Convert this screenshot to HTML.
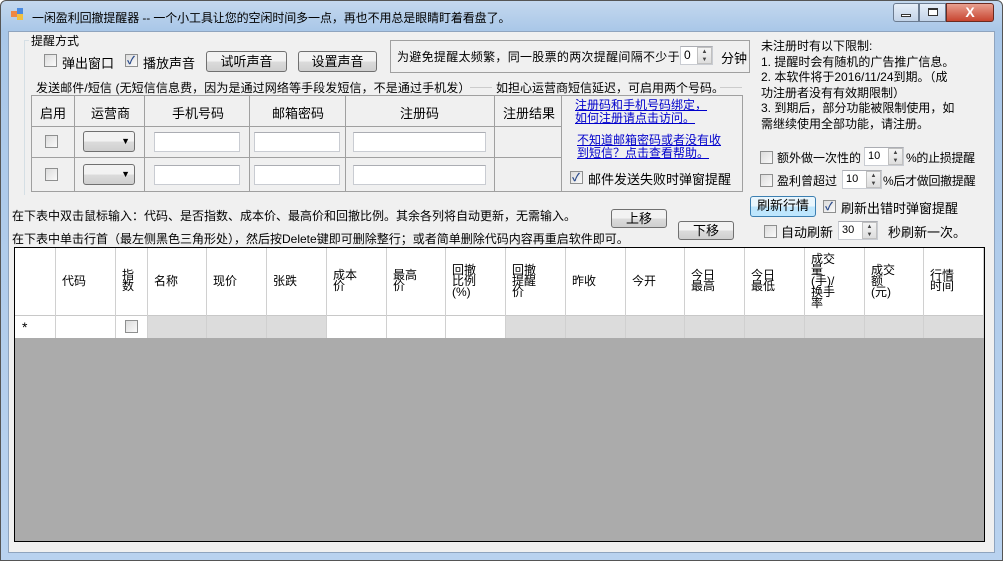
<!DOCTYPE html>
<html><head><meta charset="utf-8"><style>
*{box-sizing:border-box;margin:0;padding:0}
body{width:1003px;height:561px;overflow:hidden;background:#fff;font-family:"Liberation Sans","Noto Sans CJK SC",sans-serif;font-size:12px;color:#000;position:relative}
.a{position:absolute;white-space:nowrap}
.frame{left:0;top:0;width:1003px;height:561px;background:linear-gradient(#c4d8ee,#a9c7e8 30px,#b9d2ef);border:1px solid #555;border-radius:6px 6px 0 0}
.client{left:8px;top:31px;width:987px;height:522px;background:#f0f0f0;border:1px solid #8fa4be}
.cb{width:13px;height:13px;border:1px solid #8e8f8f;background:linear-gradient(135deg,#dcdcdc,#fafafa)}
.cb.ck::after{content:"✓";position:absolute;left:1px;top:-3px;font-size:11px;color:#2a4a8a;font-weight:bold}
.btn{border:1px solid #707070;border-radius:3px;background:linear-gradient(#f2f2f2 50%,#dcdcdc 50%,#cfcfcf);text-align:center;font-size:13px}
.tb{background:#fff;border:1px solid #c9ccd2;border-top-color:#abadb3}
.spin{width:15px;border:1px solid #c0c0c0;background:linear-gradient(#f4f4f4,#dedede);font-size:6px;text-align:center;line-height:8px;color:#444}
.line{background:#a0a0a0}
.gl{background:#d0d0d0}
a{color:#00c;text-decoration:underline}
.gh{position:absolute;top:248px;height:66px;display:flex;align-items:center;font-size:12px;line-height:11px;padding-left:7px;white-space:normal}
</style></head><body>
<div class="a frame"></div>
<div class="a" style="left:11px;top:11px;width:6px;height:6px;background:#e84"></div>
<div class="a" style="left:17px;top:8px;width:6px;height:6px;background:#4a8ae0"></div>
<div class="a" style="left:17px;top:14px;width:6px;height:6px;background:#f0c040"></div>
<div class="a" style="left:32px;top:9px;font-size:12px;letter-spacing:-0.1px">一闲盈利回撤提醒器 -- 一个小工具让您的空闲时间多一点，再也不用总是眼睛盯着看盘了。</div>
<div class="a" style="left:893px;top:3px;width:26px;height:19px;border:1px solid #6b7b90;border-radius:3px 0 0 3px;background:linear-gradient(#e6eef8,#c2d3e8)"></div>
<div class="a" style="left:901px;top:14px;width:10px;height:3px;background:#fff;border:1px solid #333"></div>
<div class="a" style="left:919px;top:3px;width:27px;height:19px;border:1px solid #6b7b90;background:linear-gradient(#e6eef8,#c2d3e8)"></div>
<div class="a" style="left:928px;top:8px;width:10px;height:8px;border:1px solid #333;border-top-width:2px;background:#fff"></div>
<div class="a" style="left:946px;top:3px;width:48px;height:19px;border:1px solid #6b2a20;border-radius:0 3px 3px 0;background:linear-gradient(#e8a090,#c84530);color:#fff;font-weight:bold;text-align:center;font-size:14px;line-height:17px">X</div>
<div class="a client"></div>

<div class="a" style="left:24px;top:40px;width:1px;height:155px;background:#d5dfe5"></div>
<div class="a" style="left:24px;top:40px;width:5px;height:1px;background:#d5dfe5"></div>
<div class="a" style="left:31px;top:32px">提醒方式</div>
<div class="a cb" style="left:44px;top:54px"></div><div class="a" style="left:62px;top:53px;font-size:13px">弹出窗口</div>
<div class="a cb ck" style="left:125px;top:54px"></div><div class="a" style="left:143px;top:53px;font-size:13px">播放声音</div>
<div class="a btn" style="left:206px;top:51px;width:81px;height:21px;line-height:19px">试听声音</div>
<div class="a btn" style="left:298px;top:51px;width:79px;height:21px;line-height:19px">设置声音</div>
<div class="a" style="left:390px;top:40px;width:360px;height:33px;border:1px solid #a0a0a0"></div>
<div class="a" style="left:397px;top:48px;font-size:12px;letter-spacing:0.3px">为避免提醒太频繁，同一股票的两次提醒间隔不少于</div>
<div class="a tb" style="left:680px;top:46px;width:33px;height:19px;padding-left:3px;line-height:16px">0</div>
<div class="a spin" style="left:697px;top:47px;height:17px">▲<br>▼</div>
<div class="a" style="left:721px;top:48px;font-size:13px">分钟</div>

<div class="a" style="left:36px;top:79px;font-size:12px;letter-spacing:0.1px">发送邮件/短信 (无短信信息费，因为是通过网络等手段发短信，不是通过手机发）</div>
<div class="a" style="left:470px;top:87px;width:22px;height:1px;background:#ccc"></div>
<div class="a" style="left:496px;top:79px;font-size:12px">如担心运营商短信延迟，可启用两个号码。</div>
<div class="a" style="left:720px;top:87px;width:22px;height:1px;background:#ccc"></div>

<div class="a" style="left:31px;top:95px;width:712px;height:97px;border:1px solid #a0a0a0"></div>
<div class="a line" style="left:31px;top:126px;width:530px;height:1px"></div>
<div class="a line" style="left:31px;top:157px;width:530px;height:1px"></div>
<div class="a line" style="left:74px;top:95px;width:1px;height:97px"></div>
<div class="a line" style="left:144px;top:95px;width:1px;height:97px"></div>
<div class="a line" style="left:249px;top:95px;width:1px;height:97px"></div>
<div class="a line" style="left:345px;top:95px;width:1px;height:97px"></div>
<div class="a line" style="left:494px;top:95px;width:1px;height:97px"></div>
<div class="a line" style="left:561px;top:95px;width:1px;height:97px"></div>
<div class="a" style="left:40px;top:103px;font-size:13px">启用</div>
<div class="a" style="left:91px;top:103px;font-size:13px">运营商</div>
<div class="a" style="left:172px;top:103px;font-size:13px">手机号码</div>
<div class="a" style="left:272px;top:103px;font-size:13px">邮箱密码</div>
<div class="a" style="left:400px;top:103px;font-size:13px">注册码</div>
<div class="a" style="left:503px;top:103px;font-size:13px">注册结果</div>
<div class="a cb" style="left:45px;top:135px"></div>
<div class="a cb" style="left:45px;top:168px"></div>
<div class="a btn" style="left:83px;top:131px;width:52px;height:21px;font-size:9px;text-align:right;padding-right:4px;line-height:19px">▼</div>
<div class="a btn" style="left:83px;top:164px;width:52px;height:21px;font-size:9px;text-align:right;padding-right:4px;line-height:19px">▼</div>
<div class="a tb" style="left:154px;top:132px;width:86px;height:20px"></div>
<div class="a tb" style="left:254px;top:132px;width:86px;height:20px"></div>
<div class="a tb" style="left:353px;top:132px;width:133px;height:20px"></div>
<div class="a tb" style="left:154px;top:165px;width:86px;height:20px"></div>
<div class="a tb" style="left:254px;top:165px;width:86px;height:20px"></div>
<div class="a tb" style="left:353px;top:165px;width:133px;height:20px"></div>
<div class="a" style="left:575px;top:99px;line-height:13px;font-size:12px"><a>注册码和手机号码绑定，<br>如何注册请点击访问。</a></div>
<div class="a" style="left:577px;top:134px;line-height:13px;font-size:12px"><a>不知道邮箱密码或者没有收<br>到短信？点击查看帮助。</a></div>
<div class="a cb ck" style="left:570px;top:171px"></div>
<div class="a" style="left:588px;top:169px;font-size:13px">邮件发送失败时弹窗提醒</div>

<div class="a" style="left:761px;top:39px;font-size:12px;line-height:15.5px">未注册时有以下限制:<br>1. 提醒时会有随机的广告推广信息。<br>2. 本软件将于2016/11/24到期。（成<br>功注册者没有有效期限制）<br>3. 到期后，部分功能被限制使用，如<br>需继续使用全部功能，请注册。</div>
<div class="a cb" style="left:760px;top:151px"></div>
<div class="a" style="left:777px;top:149px;font-size:12px">额外做一次性的</div>
<div class="a tb" style="left:864px;top:147px;width:40px;height:19px;padding-left:3px;line-height:16px;font-size:11px">10</div>
<div class="a spin" style="left:888px;top:148px;height:17px">▲<br>▼</div>
<div class="a" style="left:906px;top:149px;font-size:12px;letter-spacing:-0.3px">%的止损提醒</div>
<div class="a cb" style="left:760px;top:174px"></div>
<div class="a" style="left:777px;top:172px;font-size:12px">盈利曾超过</div>
<div class="a tb" style="left:842px;top:170px;width:40px;height:19px;padding-left:3px;line-height:16px;font-size:11px">10</div>
<div class="a spin" style="left:866px;top:171px;height:17px">▲<br>▼</div>
<div class="a" style="left:883px;top:172px;font-size:12px;letter-spacing:-0.3px">%后才做回撤提醒</div>
<div class="a btn" style="left:750px;top:196px;width:66px;height:21px;line-height:18px;border-color:#3c7fb1;background:linear-gradient(#eaf6fd 50%,#bee6fd 50%)">刷新行情</div>
<div class="a cb ck" style="left:823px;top:200px"></div>
<div class="a" style="left:841px;top:198px;font-size:13px">刷新出错时弹窗提醒</div>
<div class="a cb" style="left:764px;top:225px"></div>
<div class="a" style="left:781px;top:222px;font-size:13px">自动刷新</div>
<div class="a tb" style="left:838px;top:221px;width:40px;height:19px;padding-left:3px;line-height:16px;font-size:11px">30</div>
<div class="a spin" style="left:862px;top:222px;height:17px">▲<br>▼</div>
<div class="a" style="left:888px;top:222px;font-size:13px">秒刷新一次。</div>

<div class="a" style="left:12px;top:207px;font-size:12px">在下表中双击鼠标输入：代码、是否指数、成本价、最高价和回撤比例。其余各列将自动更新，无需输入。</div>
<div class="a" style="left:12px;top:230px;font-size:12px">在下表中单击行首（最左侧黑色三角形处），然后按Delete键即可删除整行；或者简单删除代码内容再重启软件即可。</div>
<div class="a btn" style="left:611px;top:209px;width:56px;height:19px;line-height:17px">上移</div>
<div class="a btn" style="left:678px;top:221px;width:56px;height:19px;line-height:17px">下移</div>

<div class="a" style="left:14px;top:247px;width:971px;height:295px;background:#ababab;border:1px solid #000"></div>
<div class="a" style="left:15px;top:248px;width:969px;height:67px;background:#fff"></div>
<div class="a" style="left:15px;top:315px;width:969px;height:23px;background:#dcdcdc;border-top:1px solid #c8c8c8"></div>
<div class="a" style="left:15px;top:316px;width:40px;height:22px;background:#fff"></div>
<div class="a" style="left:55px;top:316px;width:60px;height:22px;background:#fff"></div>
<div class="a" style="left:115px;top:316px;width:32px;height:22px;background:#fff"></div>
<div class="a" style="left:326px;top:316px;width:179px;height:22px;background:#fff"></div>
<div class="a" style="left:22px;top:319px;font-size:14px">*</div>
<div class="a cb" style="left:125px;top:320px"></div>
<div class="a gl" style="left:55px;top:248px;width:1px;height:90px"></div>
<div class="a gl" style="left:115px;top:248px;width:1px;height:90px"></div>
<div class="a gl" style="left:147px;top:248px;width:1px;height:90px"></div>
<div class="a gl" style="left:206px;top:248px;width:1px;height:90px"></div>
<div class="a gl" style="left:266px;top:248px;width:1px;height:90px"></div>
<div class="a gl" style="left:326px;top:248px;width:1px;height:90px"></div>
<div class="a gl" style="left:386px;top:248px;width:1px;height:90px"></div>
<div class="a gl" style="left:445px;top:248px;width:1px;height:90px"></div>
<div class="a gl" style="left:505px;top:248px;width:1px;height:90px"></div>
<div class="a gl" style="left:565px;top:248px;width:1px;height:90px"></div>
<div class="a gl" style="left:625px;top:248px;width:1px;height:90px"></div>
<div class="a gl" style="left:684px;top:248px;width:1px;height:90px"></div>
<div class="a gl" style="left:744px;top:248px;width:1px;height:90px"></div>
<div class="a gl" style="left:804px;top:248px;width:1px;height:90px"></div>
<div class="a gl" style="left:864px;top:248px;width:1px;height:90px"></div>
<div class="a gl" style="left:923px;top:248px;width:1px;height:90px"></div>
<div class="a gl" style="left:983px;top:248px;width:1px;height:90px"></div>
<div class="gh" style="left:55px;width:60px">代码</div>
<div class="gh" style="left:115px;width:24px">指数</div>
<div class="gh" style="left:147px;width:60px">名称</div>
<div class="gh" style="left:206px;width:60px">现价</div>
<div class="gh" style="left:266px;width:60px">张跌</div>
<div class="gh" style="left:326px;width:33px">成本价</div>
<div class="gh" style="left:386px;width:33px">最高价</div>
<div class="gh" style="left:445px;width:33px">回撤比例(%)</div>
<div class="gh" style="left:505px;width:33px">回撤提醒价</div>
<div class="gh" style="left:565px;width:60px">昨收</div>
<div class="gh" style="left:625px;width:60px">今开</div>
<div class="gh" style="left:684px;width:33px">今日最高</div>
<div class="gh" style="left:744px;width:33px">今日最低</div>
<div class="gh" style="left:804px;width:36px">成交量(手)/换手率</div>
<div class="gh" style="left:864px;width:33px">成交额(元)</div>
<div class="gh" style="left:923px;width:33px">行情时间</div>
</body></html>
